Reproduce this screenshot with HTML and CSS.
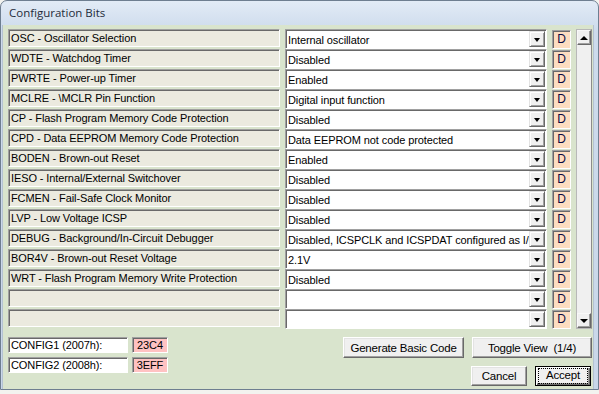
FILE: index.html
```html
<!DOCTYPE html>
<html lang="en">
<head>
  <meta charset="UTF-8" />
  <title>Configuration Bits</title>
  <link rel="stylesheet" href="styles.css">
</head>
<body>

  <div class="window">
    <div class="titlebar">Configuration Bits</div>

    <div class="client">
      <div class="bits">
        <div class="rows">
          <div class="row">
            <div class="label">OSC - Oscillator Selection</div>
            <div class="combo"><span class="value">Internal oscillator</span><span class="drop"></span></div>
            <div class="flag">D</div>
          </div>
          <div class="row">
            <div class="label">WDTE - Watchdog Timer</div>
            <div class="combo"><span class="value">Disabled</span><span class="drop"></span></div>
            <div class="flag">D</div>
          </div>
          <div class="row">
            <div class="label">PWRTE - Power-up Timer</div>
            <div class="combo"><span class="value">Enabled</span><span class="drop"></span></div>
            <div class="flag">D</div>
          </div>
          <div class="row">
            <div class="label">MCLRE - \MCLR Pin Function</div>
            <div class="combo"><span class="value">Digital input function</span><span class="drop"></span></div>
            <div class="flag">D</div>
          </div>
          <div class="row">
            <div class="label">CP - Flash Program Memory Code Protection</div>
            <div class="combo"><span class="value">Disabled</span><span class="drop"></span></div>
            <div class="flag">D</div>
          </div>
          <div class="row">
            <div class="label">CPD - Data EEPROM Memory Code Protection</div>
            <div class="combo"><span class="value">Data EEPROM not code protected</span><span class="drop"></span></div>
            <div class="flag">D</div>
          </div>
          <div class="row">
            <div class="label">BODEN - Brown-out Reset</div>
            <div class="combo"><span class="value">Enabled</span><span class="drop"></span></div>
            <div class="flag">D</div>
          </div>
          <div class="row">
            <div class="label">IESO - Internal/External Switchover</div>
            <div class="combo"><span class="value">Disabled</span><span class="drop"></span></div>
            <div class="flag">D</div>
          </div>
          <div class="row">
            <div class="label">FCMEN - Fail-Safe Clock Monitor</div>
            <div class="combo"><span class="value">Disabled</span><span class="drop"></span></div>
            <div class="flag">D</div>
          </div>
          <div class="row">
            <div class="label">LVP - Low Voltage ICSP</div>
            <div class="combo"><span class="value">Disabled</span><span class="drop"></span></div>
            <div class="flag">D</div>
          </div>
          <div class="row">
            <div class="label">DEBUG - Background/In-Circuit Debugger</div>
            <div class="combo"><span class="value">Disabled, ICSPCLK and ICSPDAT configured as I/O</span><span class="drop"></span></div>
            <div class="flag">D</div>
          </div>
          <div class="row">
            <div class="label">BOR4V - Brown-out Reset Voltage</div>
            <div class="combo"><span class="value">2.1V</span><span class="drop"></span></div>
            <div class="flag">D</div>
          </div>
          <div class="row">
            <div class="label">WRT - Flash Program Memory Write Protection</div>
            <div class="combo"><span class="value">Disabled</span><span class="drop"></span></div>
            <div class="flag">D</div>
          </div>
          <div class="row">
            <div class="label"></div>
            <div class="combo"><span class="value"></span><span class="drop"></span></div>
            <div class="flag">D</div>
          </div>
          <div class="row">
            <div class="label"></div>
            <div class="combo"><span class="value"></span><span class="drop"></span></div>
            <div class="flag">D</div>
          </div>
        </div>

        <!-- vertical scrollbar -->
        <div class="scrollbar">
          <div class="sb-btn"><span class="arrow-up"></span></div>
          <div class="sb-track"></div>
          <div class="sb-btn"><span class="arrow-down"></span></div>
        </div>
      </div>

      <div class="footer">
        <div class="regs">
          <div class="reg">
            <div class="reg-name">CONFIG1 (2007h):</div>
            <div class="reg-value">23C4</div>
          </div>
          <div class="reg">
            <div class="reg-name">CONFIG2 (2008h):</div>
            <div class="reg-value">3EFF</div>
          </div>
        </div>

        <div class="actions">
          <div class="btn-row">
            <button class="btn btn-wide">Generate Basic Code</button>
            <button class="btn btn-toggle">Toggle View&nbsp; (1/4)</button>
          </div>
          <div class="btn-row">
            <button class="btn btn-small">Cancel</button>
            <button class="btn btn-small btn-default"><span class="focus">Accept</span></button>
          </div>
        </div>
      </div>
    </div>
  </div>

</body>
</html>
```

FILE: styles.css
```css
body {
  margin: 0;
  background: #f3f3ef;
  font-family: "Liberation Sans", Arial, sans-serif;
  font-size: 11px;
  color: #000;
}

.window {
  width: 597px;
  height: 388px;
  border: 1px solid #6e7e90;
  border-radius: 7px 7px 0 0;
  background: linear-gradient(to bottom, #e2ebf6, #cddbec 30px, #c9d7e9);
  display: flex;
  flex-direction: column;
}

.titlebar {
  height: 24px;
  line-height: 24px;
  padding-left: 8px;
  font-family: "Open Sans", "Noto Sans", sans-serif;
  font-size: 11.5px;
  color: #1f2c3b;
}

.client {
  flex: 1;
  margin: 0 4px 0 1px;
  padding: 4px 1px 0 5px;
  background: #d9e4cd;
  border-left: 1px solid #b4c2d2;
  border-right: 1px solid #b4c2d2;
}

.bits {
  display: flex;
  gap: 5px;
}

.rows {
  display: flex;
  flex-direction: column;
}

.row {
  display: flex;
  align-items: flex-start;
  height: 20px;
  gap: 5px;
}

/* sunken classic boxes */
.label,
.combo,
.flag,
.reg-name,
.reg-value {
  box-sizing: border-box;
  border: 1px solid;
  border-color: #a0a0a0 #ffffff #ffffff #a0a0a0;
  box-shadow: inset 1px 1px 0 #696969;
  white-space: nowrap;
  overflow: hidden;
  letter-spacing: -0.1px;
}

.label {
  width: 272px;
  height: 18px;
  line-height: 16px;
  padding-left: 2px;
  background: #ebeadf;
}

.combo {
  width: 262px;
  height: 20px;
  background: #fff;
  display: flex;
  align-items: center;
  padding: 1px 1px 1px 2px;
}

.combo .value {
  flex: 1;
  overflow: hidden;
  line-height: 18px;
  padding-top: 1px;
}

.drop {
  width: 16px;
  height: 16px;
  box-sizing: border-box;
  background: #f0f0f0;
  border: 1px solid;
  border-color: #e3e3e3 #696969 #696969 #e3e3e3;
  box-shadow: inset 1px 1px 0 #fff, inset -1px -1px 0 #a0a0a0;
  display: flex;
  align-items: center;
  justify-content: center;
  padding-top: 2px;
}

.drop::after {
  content: "";
  border-left: 3.5px solid transparent;
  border-right: 3.5px solid transparent;
  border-top: 4px solid #000;
}

.flag {
  width: 19px;
  height: 19px;
  background: #fdddc0;
  text-align: center;
  line-height: 16px;
  font-size: 12px;
  color: #0a0a40;
  margin-top: 1px;
}

.scrollbar {
  width: 16px;
  height: 300px;
  box-sizing: border-box;
  border: 1px solid #b8b8b8;
  border-right-color: #8c8c8c;
  background: #f0f0f0;
  display: flex;
  flex-direction: column;
}

.sb-track {
  flex: 1;
}

.sb-btn {
  height: 15px;
  box-sizing: border-box;
  background: #f0f0f0;
  border: 1px solid;
  border-color: #f8f8f8 #696969 #696969 #f8f8f8;
  box-shadow: inset -1px -1px 0 #a0a0a0;
  display: flex;
  align-items: center;
  justify-content: center;
}

.arrow-up {
  border-left: 4px solid transparent;
  border-right: 4px solid transparent;
  border-bottom: 4px solid #000;
}

.arrow-down {
  border-left: 4px solid transparent;
  border-right: 4px solid transparent;
  border-top: 4px solid #000;
}

.footer {
  display: flex;
  justify-content: space-between;
  margin-top: 8px;
}

.regs {
  display: flex;
  flex-direction: column;
  gap: 4px;
}

.reg {
  display: flex;
  gap: 4px;
}

.reg-name {
  width: 120px;
  height: 16px;
  line-height: 14px;
  padding-left: 2px;
  background: #fff;
}

.reg-value {
  width: 36px;
  height: 16px;
  line-height: 14px;
  text-align: center;
  background: #ffc2c2;
}

.actions {
  display: flex;
  flex-direction: column;
  align-items: flex-end;
  gap: 8px;
}

.btn-row {
  display: flex;
  gap: 8px;
}

.btn {
  box-sizing: border-box;
  height: 21px;
  padding: 0;
  font-family: "Liberation Sans", Arial, sans-serif;
  font-size: 11.5px;
  letter-spacing: -0.2px;
  color: #000;
  background: #f0f0f0;
  border: 1px solid;
  border-color: #fff #696969 #696969 #fff;
  box-shadow: inset -1px -1px 0 #a0a0a0, inset 1px 1px 0 #e3e3e3;
}

.btn-wide {
  width: 121px;
}

.btn-toggle {
  width: 120px;
}

.btn-small {
  width: 56px;
  height: 20px;
}

.btn-default {
  border: 1px solid #000;
  box-shadow: inset 1px 1px 0 #fff, inset -1px -1px 0 #696969, inset -2px -2px 0 #a0a0a0;
  margin-right: 1px;
}

.btn-default .focus {
  display: block;
  margin: 0 3px;
  height: 14px;
  line-height: 13px;
  outline: 1px dotted #000;
}
```
